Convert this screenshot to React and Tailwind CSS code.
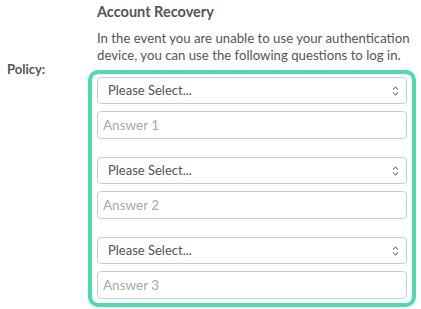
import React from 'react';

// small up/down chevron shown on the right of each select
const Chevrons = () => (
  <svg width="7" height="12" viewBox="0 0 7 12" className="pointer-events-none absolute right-[8px] top-1/2 -translate-y-1/2">
    <path d="M1 4.5 L3.5 2 L6 4.5" fill="none" stroke="#8a8a8a" strokeWidth="1.1" />
    <path d="M1 7.5 L3.5 10 L6 7.5" fill="none" stroke="#8a8a8a" strokeWidth="1.1" />
  </svg>
);

const QuestionGroup = ({ n }) => (
  <div className="flex flex-col gap-[7px]">
    <div className="relative">
      <select className="block h-[27px] w-full appearance-none rounded-[4px] border border-[#cccccc] bg-white pl-[10px] pr-6 text-[13px] text-[#555555] outline-none">
        <option>Please Select...</option>
      </select>
      <Chevrons />
    </div>
    <input
      placeholder={`Answer ${n}`}
      className="block h-[28px] w-full rounded-[4px] border border-[#cccccc] bg-white px-[5px] text-[13.5px] text-[#555555] outline-none placeholder:text-[#a9a9a9]"
    />
  </div>
);

export default function App() {
  return (
    <div className="flex h-[309px] w-[421px] overflow-hidden bg-white font-['Lato',sans-serif] text-[#555555]">
      <div className="w-[88px] shrink-0 pl-[7px] pt-[56px]">
        <span className="text-[13px] font-bold leading-[17px]">Policy:</span>
      </div>

      <div className="flex w-[328px] flex-col pt-[2px]">
        <h3 className="pl-[9px] text-[14.5px] font-bold leading-[20px]">Account Recovery</h3>
        <p className="mt-[8px] whitespace-nowrap pl-[9px] text-[13.2px] leading-[17px]">
          In the event you are unable to use your authentication
          <br />
          device, you can use the following questions to log in.
        </p>

        <div className="mt-[6px] flex flex-col gap-[18px] rounded-[10px] border-4 border-[#4bdbaf] pb-[4px] pl-[5px] pr-[5px] pt-[3px]">
          <QuestionGroup n={1} />
          <QuestionGroup n={2} />
          <QuestionGroup n={3} />
        </div>
      </div>
    </div>
  );
}
